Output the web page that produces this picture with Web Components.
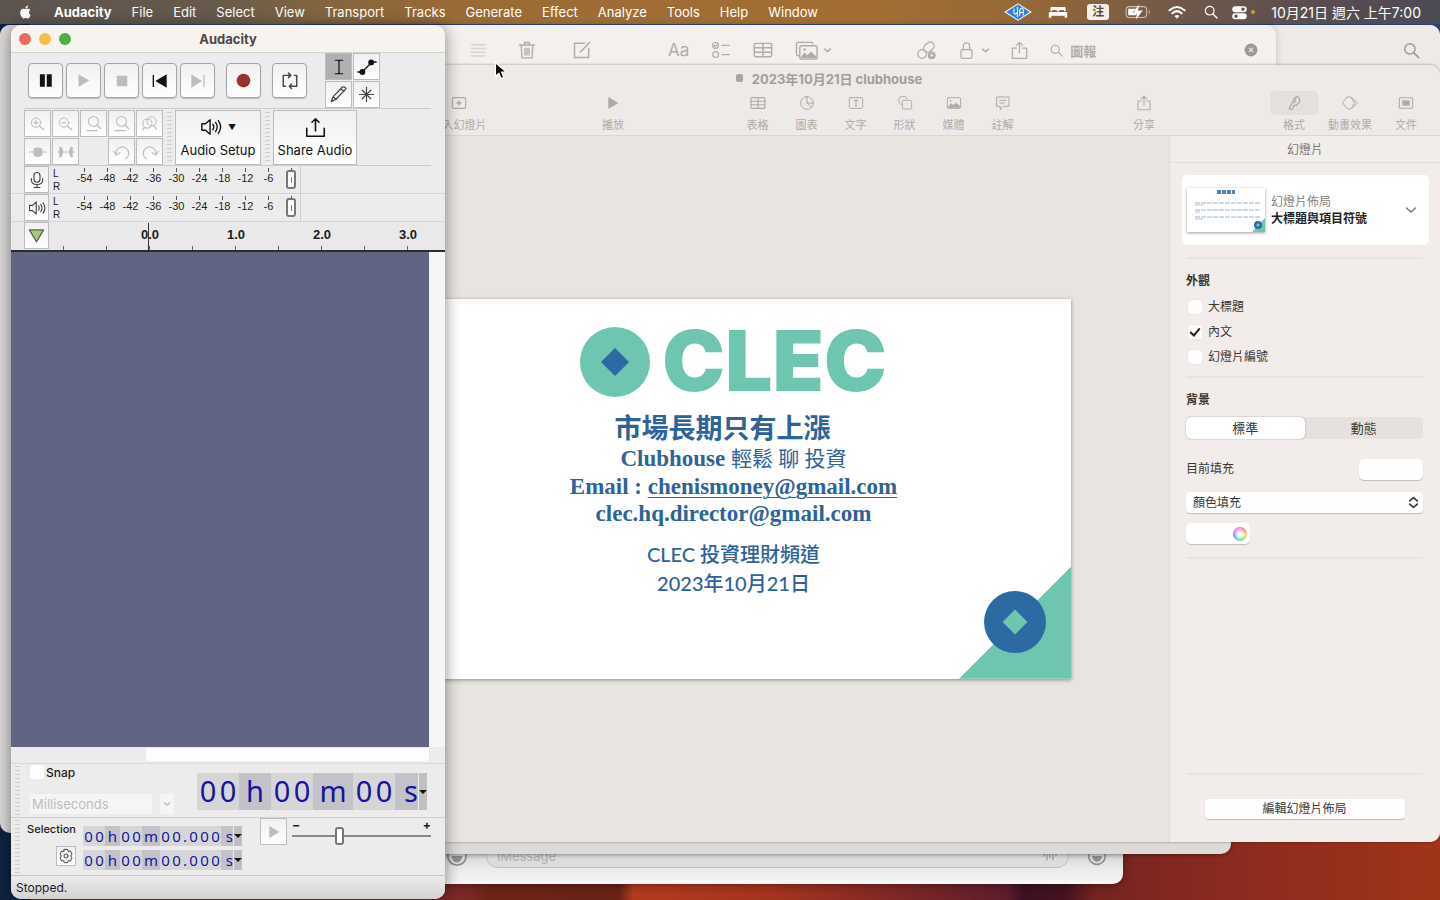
<!DOCTYPE html>
<html lang="zh-Hant">
<head>
<meta charset="utf-8">
<title>Desktop</title>
<style>
html,body{margin:0;height:100%}
body{font-family:Inter,"Noto Sans CJK TC",sans-serif;font-size:13px;overflow:hidden}
</style>
</head>
<body>
<mac-desktop></mac-desktop>
<script>
const BASE = `*{box-sizing:border-box}button,input,select{font:inherit;color:inherit;margin:0;padding:0;border:0;background:none}a{color:inherit;text-decoration:none}`;

class BaseElement extends HTMLElement {
  constructor() {
    super();
    this.attachShadow({ mode: "open" });
  }
  connectedCallback() {
    if (!this.shadowRoot.firstChild) this.shadowRoot.innerHTML = `<style>${BASE}${this.styles()}</style>${this.markup()}`;
  }
  styles() { return ":host{display:block}"; }
  markup() { return "<slot></slot>"; }
}

/* ---------- icons, all on a 24 by 24 grid ---------- */
const S = 'fill="none" stroke="currentColor" stroke-linecap="round" stroke-linejoin="round"';
const F = 'fill="currentColor"';
const ICONS = {
  apple: `<path ${F} d="M16.4 12.7c0-2.4 2-3.6 2.1-3.700-1.100-1.700-2.900-1.900-3.500-1.900-1.500-.2-2.900.9-3.700.9-.8 0-1.900-.9-3.200-.8-1.600 0-3.100.9-4 2.400-1.700 2.900-.4 7.300 1.200 9.700.8 1.200 1.800 2.500 3 2.400 1.200 0 1.700-.8 3.200-.8s1.900.8 3.200.8 2.200-1.200 3-2.300c.9-1.400 1.300-2.700 1.300-2.800 0 0-2.600-1-2.600-3.900zM14 5.500c.7-.8 1.100-1.900 1-3.100-1 .1-2.100.7-2.800 1.500-.6.7-1.200 1.900-1 3 1.100.1 2.200-.6 2.800-1.400z"/>`,
  ua: `<path d="M1 12 12 5l11 7-11 7z" fill="#2f83d2" stroke="#e8f1fa" stroke-width="1"/><path d="M8.500 9.500v3.500q1.500 2 3-1V8.500M11.500 8v8M13.500 15V10q2-3 3 0v4.500M13.500 12.500h3" ${S} stroke-width=".9"/>`,
  bed: `<path ${F} d="M4 6h16a1 1 0 0 1 1 1v4h-2V9.500h-5.500V11h-3V9.500H5V11H3V7a1 1 0 0 1 1-1zM2 12h20a1 1 0 0 1 1 1v6h-3v-2.500H4V19H1v-6a1 1 0 0 1 1-1z"/>`,
  battery: `<rect x="1" y="7" width="19" height="10" rx="3" ${S} stroke-width="1" opacity=".6"/><path ${F} d="M3 9h7l-2 4h3l-1 2H3zM13 5l-6 8h4l-1 6 6.500-8.500H12z"/><path ${F} opacity=".6" d="M22 10v4q2-2 0-4z"/>`,
  wifi: `<path d="M3 10q9-8 18 0M6.500 13.500q5.500-5 11 0" ${S} stroke-width="2.500"/><path ${F} d="m12 20-3-3.200q3-2.500 6 0z"/>`,
  search: `<circle cx="10" cy="10" r="6.500" ${S} stroke-width="1.800"/><path d="m15 15 6 6" ${S} stroke-width="2"/>`,
  control: `<path ${F} fill-rule="evenodd" d="M6 3h12a4 4 0 0 1 0 8.500H6A4 4 0 0 1 6 3zm11 1.800a2.400 2.400 0 1 0 .1 0zM6 13h12a4 4 0 0 1 0 8.500H6A4 4 0 0 1 6 13zm1 1.800a2.400 2.400 0 1 0 .1 0z"/>`,
  list: `<path d="M3 5h18M3 10h18M3 15h18M3 20h18" ${S} stroke-width="2"/>`,
  trash: `<path d="M3 6h18M9 6V3h6v3M5 6l1 15.500h12L19 6M9.500 10v8M12 10v8M14.500 10v8" ${S} stroke-width="1.600"/>`,
  compose: `<path d="M15 4H3v17h17V10M10 14.500 21 3" ${S} stroke-width="1.800"/>`,
  checklist: `<circle cx="5.500" cy="6.500" r="3.500" ${S} stroke-width="1.400"/><path d="m4 6.500 1.200 1.500L8 4.500M13 6.500h9M13 17.500h9" ${S} stroke-width="1.400"/><circle cx="5.500" cy="17.500" r="3.500" ${S} stroke-width="1.400"/>`,
  table: `<rect x="1.500" y="4" width="21" height="16" rx="2" ${S} stroke-width="1.700"/><path d="M2 9.300h20M2 14.600h20M12 4v16" ${S} stroke-width="1.700"/>`,
  media: `<path d="M4 17.500H3a1.500 1.500 0 0 1-1.500-1.500V5A1.500 1.500 0 0 1 3 3.500h14A1.500 1.500 0 0 1 18.500 5" ${S} stroke-width="1.500"/><rect x="5" y="7" width="18" height="14" rx="2" ${S} stroke-width="1.500"/><path ${F} d="m6 19 4-5 3 3 3.500-4L22 18v2H6z"/><circle cx="10" cy="11" r="1.300" ${F}/>`,
  photo: `<rect x="2" y="4" width="20" height="16" rx="2" ${S} stroke-width="1.500"/><path ${F} d="m3 18 5-6 3 3.500 4-4 6 5V19H3z"/><circle cx="7" cy="8.500" r="1.300" ${F}/>`,
  chevron: `<path d="m4 8 8 7 8-7" ${S} stroke-width="4"/>`,
  chevronThin: `<path d="m3 8 9 8 9-8" ${S} stroke-width="3"/>`,
  link: `<circle cx="7" cy="16" r="5" ${S} stroke-width="1.500"/><rect x="8" y="4" width="13" height="9" rx="4.500" transform="rotate(-40 14 8)" ${S} stroke-width="1.500"/><circle cx="18" cy="17.500" r="4.500" ${F}/><path d="M18 15.500v4M16 17.500h4" stroke="#f1edea" stroke-width="1"/>`,
  lock: `<rect x="5" y="11" width="14" height="11" rx="2" ${S} stroke-width="1.600"/><path d="M8 11V7q0-4.500 4-4.500T16 7v4" ${S} stroke-width="1.600"/>`,
  share: `<path d="M8 9H3v13h18V9h-5M12 15V2M8 5.500 12 2l4 3.500" ${S} stroke-width="1.600"/>`,
  clear: `<circle cx="12" cy="12" r="11" ${F}/><path d="m8.500 8.500 7 7m0-7-7 7" stroke="#eee" stroke-width="2"/>`,
  add: `<rect x="2" y="4" width="20" height="16" rx="1.500" ${S} stroke-width="1.700"/><path d="M12 9v6M9 12h6" ${S} stroke-width="2.200"/>`,
  play: `<path ${F} d="M5 3v18l15-9z"/>`,
  chart: `<circle cx="12" cy="12" r="9.500" ${S} stroke-width="1.500"/><path d="M12 2.500V12l7 6.500M12 12h9.500" ${S} stroke-width="1.500"/>`,
  text: `<rect x="2" y="4" width="20" height="16" rx="1.500" ${S} stroke-width="1.500"/><path d="M9 9V8h6v1M12 8v8M11 16h2" ${S} stroke-width="1.500"/>`,
  shape: `<path d="M6 14.500 2 8.500 5 2.500h8l2 3" ${S} stroke-width="1.400"/><rect x="8" y="8" width="14" height="13" rx="2" ${S} stroke-width="1.400"/>`,
  note: `<path d="M3 3h18v14h-8l-5 5v-5H3zM7 8h10M7 12h7" ${S} stroke-width="1.500"/>`,
  brush: `<path d="M16 2q6 2 4 9l-5 5-3-1-2 6q-3 2-5-1l7-14zM12 12l3-6" ${S} stroke-width="1.800"/>`,
  anim: `<path d="M8 3h5l6 9-6 9H8l-7-9zM15 4l8 8-8 8" ${S} stroke-width="1.500"/>`,
  doc: `<rect x="2" y="4" width="20" height="16" rx="1.500" ${S} stroke-width="1.600"/><rect x="6.500" y="8" width="11" height="8" ${F}/>`,
  pause: `<path ${F} d="M3 2h8v20H3zM14 2h8v20h-8z"/>`,
  stop: `<path ${F} d="M3 3h18v18H3z"/>`,
  start: `<path ${F} d="M1 3h2v18H1zM22 2v20L5 12z"/>`,
  end: `<path ${F} d="M20 3h2v18h-2zM2 2v20l16-10z"/>`,
  record: `<circle cx="12" cy="12" r="11" ${F}/>`,
  loop: `<path d="M3 9V4.500h9M21 9V4.500h-3M3 6v13h3M21 6v13h-9M10 1.500l3 3-3 3M14 16l-3 3 3 3" ${S} stroke-width="1.900"/>`,
  ibeam: `<path d="M7 3h4l1 1 1-1h4M7 21h4l1-1 1 1h4M12 4v16" ${S} stroke-width="1.600"/>`,
  envelope: `<path d="M1 18h5L18 6h5" ${S} stroke-width="1.600"/><circle cx="6.500" cy="18" r="3.500" ${F}/><circle cx="17" cy="6.500" r="3.500" ${F}/>`,
  pencil: `<path d="m3 21 2-6L17 2.500q3-1 4.500 2L9 18zM5 15l4 3M15 5l4 3" ${S} stroke-width="1.600"/>`,
  star: `<path d="M12 2v20M2 12h20M6 6l12 12M18 6 6 18" ${S} stroke-width="1.600"/>`,
  zoomIn: `<circle cx="9" cy="10" r="7" ${S} stroke-width="1.500"/><path d="m14 15 7 6M9 7v6M6 10h6" ${S} stroke-width="1.700"/>`,
  zoomOut: `<circle cx="9" cy="10" r="7" ${S} stroke-width="1.500"/><path d="m14 15 7 6M6 10h6" ${S} stroke-width="1.700"/>`,
  zoomSel: `<circle cx="12" cy="9" r="7" ${S} stroke-width="1.500"/><path d="m17 14 5 5M3 22h14" ${S} stroke-width="1.900"/>`,
  zoomToggle: `<circle cx="9" cy="12" r="6.500" ${S} stroke-width="1.500"/><circle cx="15" cy="9" r="6.500" ${S} stroke-width="1.500"/><path d="m18 15 4 5M5 18l-3 3" ${S} stroke-width="1.700"/>`,
  trim: `<path d="M1 12h22" ${S} stroke-width="1.500"/><path ${F} d="M6 8q5-5 12 0v8q-7 5-12 0z"/>`,
  silence: `<path d="M1 12h22" ${S} stroke-width="1.500"/><path ${F} d="M3 5h3l2 5v4l-2 5H3zM21 5h-3l-2 5v4l2 5h3z"/>`,
  undo: `<path d="M4 15a8.500 8.500 0 1 1 13 6M1 11l3 5 5-3" ${S} stroke-width="1.700"/>`,
  redo: `<path d="M20 15a8.500 8.500 0 1 0-13 6M23 11l-3 5-5-3" ${S} stroke-width="1.700"/>`,
  speaker: `<path d="M2 8.500h4L11 4v16l-5-4.500H2zM14 9q2 3 0 6M17 7q3.500 5 0 10M20 5q5 7 0 14" ${S} stroke-width="1.500"/>`,
  upload: `<path d="M2 13v9h20v-9M12 16V2M8 6l4-4 4 4" ${S} stroke-width="1.800"/>`,
  mic: `<rect x="8" y="2" width="8" height="13" rx="4" ${S} stroke-width="1.500"/><path d="M4.500 10v2q0 6 7.500 6t7.500-6v-2M12 18v4M8 22h8" ${S} stroke-width="1.500"/>`,
  pin: `<path d="M2 4h20L12 21z" fill="#a6c97a" stroke="#5d6650" stroke-width="1.800" stroke-linejoin="round"/>`,
  gear: `<path d="M9.500 2h5l1 3 3-.5 2.500 4.500-2 3 2 3-2.500 4.500-3-.5-1 3h-5l-1-3-3 .5L3 15l2-3-2-3 2.500-4.500 3 .5z" ${S} stroke-width="1.500"/><circle cx="12" cy="12" r="3" ${S} stroke-width="1.500"/>`,
  updown: `<path d="m5 9 7-6 7 6M5 15l7 6 7-6" ${S} stroke-width="3"/>`,
  wave: `<path d="M3 6v6M7.500 2v16M12 5v10M16.500 2v16M21 6v6" ${S} stroke-width="1.500"/>`,
  smile: `<circle cx="12" cy="12" r="10" ${S} stroke-width="2"/><path ${F} d="M6 12h12q-1 7-6 7t-6-7z"/>`,
  cursor: `<path d="M2 1v18l4.500-4 3 7 3.500-1.500-3-7h6.500z" fill="#000" stroke="#fff" stroke-width="1.500"/>`
};
class UiIcon extends BaseElement {
  styles() {
    const s = this.getAttribute("size") || 16;
    return `:host{display:block;flex:none;width:${s}px;height:${s}px}svg{display:block;width:100%;height:100%}`;
  }
  markup() { return `<svg viewBox="0 0 24 24" aria-hidden="true">${ICONS[this.getAttribute("name")]}</svg>`; }
}
customElements.define("ui-icon", UiIcon);
const icon = (name, size) => `<ui-icon name="${name}" size="${size || 16}"></ui-icon>`;

/* ---------- menu bar ---------- */
class MenuBar extends BaseElement {
  styles() {
    return `:host{display:flex;justify-content:space-between;align-items:center;height:24px;padding:0 19px 0 18px;color:#fff;
      background:linear-gradient(90deg,#5c544f 0,#665a4b 15%,#82653f 22%,#9b6b35 32%,#a36e33 60%,#946837 72%,#70584a 82%,#584d50 92%,#4d4a56 100%)}
      nav,.status{display:flex;align-items:center}nav{gap:20px}nav a{white-space:nowrap}.app{font-weight:700}
      .status{gap:16px}.ime{width:22px;height:16px;margin-left:3px;border-radius:3px;background:#f6efe6;color:#5c4934;text-align:center;font-size:12px;line-height:16px;font-weight:700}
      .cc{display:flex;align-items:center;gap:3px;margin-left:-4px}.cc i{width:4px;height:4px;border-radius:50%;background:#d69a34}time{font-size:14px;white-space:nowrap}`;
  }
  markup() {
    const items = ["File", "Edit", "Select", "View", "Transport", "Tracks", "Generate", "Effect", "Analyze", "Tools", "Help", "Window"];
    return `<nav>${icon("apple", 16)}<a class="app" href="#">Audacity</a>${items.map(t => `<a href="#">${t}</a>`).join("")}</nav>
      <div class="status">${icon("ua", 28)}${icon("bed", 20)}<span class="ime">注</span>${icon("battery", 26)}${icon("wifi", 20)}${icon("search", 16)}<span class="cc">${icon("control", 17)}<i></i></span><time>10月21日 週六 上午7:00</time></div>`;
  }
}
customElements.define("menu-bar", MenuBar);

/* ---------- background windows ---------- */
class FinderWindow extends BaseElement {
  styles() {
    return `:host{display:block;background:#dcdad9;border-radius:10px}
      header{display:flex;justify-content:flex-end;align-items:center;height:50px;padding:0 19px;background:linear-gradient(90deg,#dcdad9,#eeeae7 60%);border-radius:10px 10px 0 0;color:#9b9895}`;
  }
  markup() { return `<header><button aria-label="Search">${icon("search", 19)}</button></header>`; }
}
customElements.define("finder-window", FinderWindow);

class NotesWindow extends BaseElement {
  styles() {
    return `:host{display:block;background:#dedbda;border-radius:10px;box-shadow:0 0 6px #0003}
      header{display:flex;align-items:center;height:50px;padding:0 18px 0 170px;background:#f4f0ed;border-radius:10px 10px 0 0;color:#b0acaa}
      .g{display:flex;align-items:center}.edit{gap:35px}.format{gap:22px;margin-left:76px;font-size:17px}.more{gap:20px;margin-left:84px}
      .pair{display:flex;align-items:center;gap:5px}.faint{opacity:.4;margin-right:-5px}
      label{display:flex;flex:1;min-width:0;align-items:center;gap:6px;margin-left:20px}input{flex:1;min-width:0;font-weight:700}label ui-icon:last-child{color:#9c9996}`;
  }
  markup() {
    return `<header><div class="g edit"><button class="faint" aria-label="List">${icon("list", 18)}</button><button aria-label="Delete">${icon("trash", 20)}</button><button aria-label="New note">${icon("compose", 20)}</button></div>
      <div class="g format"><button>Aa</button><button aria-label="Checklist">${icon("checklist", 20)}</button><button aria-label="Table">${icon("table", 20)}</button><button class="pair" aria-label="Media">${icon("media", 23)}${icon("chevron", 9)}</button></div>
      <div class="g more"><button aria-label="Link">${icon("link", 21)}</button><button class="pair" aria-label="Lock">${icon("lock", 19)}${icon("chevron", 9)}</button><button aria-label="Share">${icon("share", 19)}</button></div>
      <label>${icon("search", 15)}<input aria-label="Search" value="圖報">${icon("clear", 14)}</label></header>`;
  }
}
customElements.define("notes-window", NotesWindow);

class ChatWindow extends BaseElement {
  styles() {
    return `:host{display:flex;flex-direction:column;justify-content:flex-end;background:linear-gradient(0deg,#f8f8f8,#e8e8e8 18px,#cfcfcf 32px);border-radius:10px;box-shadow:0 2px 8px #0005}
      footer{display:flex;align-items:center;gap:18px;padding:0 16px 16px;color:#8f8f8f}
      label{display:flex;flex:1;align-items:center;height:24px;padding:0 10px;border:1px solid #c0c0c0;border-radius:12px;background:#dcdcdc}
      input{flex:1;color:#999}input::placeholder{color:#b0b0b0}`;
  }
  markup() { return `<footer>${icon("smile", 22)}<label><input aria-label="Message" placeholder="iMessage">${icon("wave", 16)}</label>${icon("smile", 20)}</footer>`; }
}
customElements.define("chat-window", ChatWindow);

/* ---------- presentation window ---------- */
class ToolItem extends BaseElement {
  styles() {
    return `:host{display:block}button{display:flex;flex-direction:column;align-items:center;gap:2px;width:100%;white-space:nowrap;font-size:11px;line-height:16px}
      .pic{display:flex;justify-content:center;align-items:center;width:100%;height:24px}:host([active]) .pic{background:#e4e0dd;border-radius:5px}`;
  }
  markup() { return `<button><span class="pic">${icon(this.getAttribute("icon"), 16)}</span><slot></slot></button>`; }
}
customElements.define("tool-item", ToolItem);

class CoinMark extends BaseElement {
  styles() { return `:host{display:block;flex:none}svg{display:block;width:100%;height:100%}`; }
  markup() { return `<svg viewBox="0 0 70 70"><circle cx="35" cy="35" r="35" fill="var(--disc)"/><path d="m35 21 14 14-14 14-14-14z" fill="var(--gem)"/></svg>`; }
}
customElements.define("coin-mark", CoinMark);

class ClecSlide extends BaseElement {
  styles() {
    return `:host{display:block;position:relative;aspect-ratio:676/380;background:#fff;box-shadow:0 1px 4px #0006;color:#2d6399;text-align:center}
      .logo{display:flex;justify-content:center;align-items:flex-start;gap:12px;height:70px;margin-top:28px;color:#6ec5b0;font:900 84px/68px Inter,sans-serif}
      .logo coin-mark{width:70px;height:70px;--disc:#6ec5b0;--gem:#2b6aa3}
      h1{margin:12px 22px 0 0;font:700 27px/36px "Noto Sans CJK TC",sans-serif}
      p{margin:0;font:700 23px/27px "Liberation Serif","Noto Sans CJK TC",serif}p span{font-weight:400;font-size:21px}p a{text-decoration:underline;text-decoration-thickness:1px;text-underline-offset:3px}
      .foot{margin-top:13px;font:500 20px/29px Lato,"Noto Sans CJK TC",sans-serif}
      .corner{position:absolute;right:0;bottom:0;width:112px;height:112px;background:#6ec5b0;clip-path:polygon(100% 0,100% 100%,0 100%)}
      .badge{position:absolute;right:25px;bottom:26px;width:62px;height:62px;--disc:#2b6aa3;--gem:#6ec5b0}`;
  }
  markup() {
    return `<div class="logo"><coin-mark></coin-mark><span>CLEC</span></div><h1>市場長期只有上漲</h1>
      <p>Clubhouse <span>輕鬆 聊 投資</span></p><p>Email : <a href="#">chenismoney@gmail.com</a></p><p>clec.hq.director@gmail.com</p>
      <div class="foot">CLEC 投資理財頻道<br>2023年10月21日</div><div class="corner"></div><coin-mark class="badge"></coin-mark>`;
  }
}
customElements.define("clec-slide", ClecSlide);

class SlideThumb extends BaseElement {
  styles() { return `:host{display:block;flex:none;width:78px;height:44px;box-shadow:0 1px 3px #0006;background:#fff}svg{display:block}`; }
  markup() {
    return `<svg width="78" height="44" viewBox="0 0 78 44"><path d="M30 4h18" stroke="#4f7fb5" stroke-width="4" stroke-dasharray="4 1"/>
      <path d="M8 15h65M8 22h64M8 29h65" stroke="#9ab3cf" stroke-width="1" stroke-dasharray="5 1"/><path d="M8 17h8M8 24h5M8 31h8" stroke="#b5c7db"/><path d="M78 30v14H65z" fill="#6ec5b0"/><circle cx="71" cy="37" r="4" fill="#2b6aa3"/><path d="m71 35 2 2-2 2-2-2z" fill="#6ec5b0"/></svg>`;
  }
}
customElements.define("slide-thumb", SlideThumb);

class CheckRow extends BaseElement {
  styles() {
    return `:host{display:block}label{display:flex;align-items:center;gap:6px;height:25px;padding-left:2px}
      input{appearance:none;display:grid;place-items:center;width:14px;height:14px;border-radius:3px;background:#fff;box-shadow:0 0 1px #0003}
      input:checked::after{content:"";width:4px;height:8px;margin-bottom:2px;border:solid #222;border-width:0 2px 2px 0;rotate:40deg}`;
  }
  markup() { return `<label><input type="checkbox" ${this.hasAttribute("checked") ? "checked" : ""}><slot></slot></label>`; }
}
customElements.define("check-row", CheckRow);

class FormatInspector extends BaseElement {
  styles() {
    return `:host{display:flex;flex-direction:column;background:#f2edea;border-left:1px solid #dfdad7;color:#3a3735;font-size:12px;line-height:18px}
      .title{height:27px;line-height:27px;text-align:center;border-bottom:1px solid #e3dcd9;color:#7b7775}
      .body{display:flex;flex-direction:column;flex:1;padding:12px 17px 0 16px}
      .layout{display:flex;align-items:center;gap:6px;height:70px;margin:0 -6px 12px -4px;padding:0 12px 0 5px;border-radius:5px;background:#fff;text-align:left;line-height:17px}
      .layout span{flex:1;color:#858280}.layout b{display:block;color:#222}.layout ui-icon{color:#777}
      hr{width:100%;margin:0;border:0;border-top:2px solid #e9e3e0}
      section{display:flex;flex-direction:column;padding:12px 0 7px}h2{margin:0 0 3px;font-size:12px;line-height:20px}
      .seg{display:flex;margin:4px 0 18px;height:22px;background:#e6e0de;border-radius:5px}.seg button{flex:1;font-size:13px}.seg .on{background:#fff;border-radius:5px;box-shadow:0 0 2px #0005}
      .row{display:flex;justify-content:space-between;align-items:center;height:24px}.well{width:64px;height:21px;border-radius:5px;background:#fff;box-shadow:0 1px 1px #0003}
      .pick{display:grid;align-items:center;margin:11px 0 10px}.pick>*{grid-area:1/1}.pick ui-icon{justify-self:end;margin-right:3px;pointer-events:none}
      select{appearance:none;width:100%;height:21px;padding:0 7px;border-radius:4px;background:#fff;box-shadow:0 1px 1px #0003}
      .colour{display:flex;justify-content:flex-end;align-items:center;padding-right:3px;margin-bottom:6px}.colour i{width:14px;height:14px;border-radius:50%;background:radial-gradient(#fff 20%,#fff0 75%),conic-gradient(#f6c,#f66,#fc4,#6d6,#4cf,#66f,#c6f,#f6c)}
      .end{margin-top:auto}.edit{align-self:center;width:200px;height:20px;margin:24px 0 23px;border-radius:4px;background:#fff;box-shadow:0 1px 1px #0003}`;
  }
  markup() {
    return `<div class="title">幻燈片</div><div class="body">
      <button class="layout"><slide-thumb></slide-thumb><span>幻燈片佈局<b>大標題與項目符號</b></span>${icon("chevronThin", 12)}</button>
      <hr><section><h2>外觀</h2><check-row>大標題</check-row><check-row checked>內文</check-row><check-row>幻燈片編號</check-row></section>
      <hr><section><h2>背景</h2><div class="seg"><button class="on">標準</button><button>動態</button></div>
      <div class="row"><span>目前填充</span><button class="well" aria-label="目前填充"></button></div>
      <div class="pick"><select aria-label="填充"><option>顏色填充</option></select>${icon("updown", 13)}</div>
      <button class="well colour" aria-label="顏色"><i></i></button></section><hr>
      <hr class="end"><button class="edit">編輯幻燈片佈局</button></div>`;
  }
}
customElements.define("format-inspector", FormatInspector);

class KeynoteWindow extends BaseElement {
  styles() {
    return `:host{display:flex;flex-direction:column;background:#e8e5e1;border-radius:10px;box-shadow:0 0 3px #0006;overflow:hidden}
      header{background:#eeeae8;border-bottom:1px solid #d9d5d2;color:#aeaaa7}
      .title{display:flex;justify-content:center;align-items:center;gap:9px;height:26px;padding-right:12px;font-weight:700;color:#a29e9b}.title i{width:7px;height:8px;border-radius:2px;background:#a9a5a2}
      .tools{display:flex;height:44px;padding:0 10px 0 199px}.tools tool-item{width:48px}.tools .w{width:60px}.tools .x{width:64px}.insert{display:flex}.insert tool-item{width:49px}
      .gap1{flex:100}.gap2{flex:96}.gap3{flex:93}.gap4{flex:102}
      .main{display:flex;flex:1;min-height:0}.canvas{display:flex;align-items:center;flex:1;padding:0 98px 0 166px}clec-slide{width:100%}format-inspector{width:271px}`;
  }
  markup() {
    const t = (i, l, a = "") => `<tool-item icon="${i}" ${a}>${l}</tool-item>`;
    return `<header><div class="title"><i></i><span>2023年10月21日 clubhouse</span></div><div class="tools">
      ${t("add", "加入幻燈片", 'class="w"')}<span class="gap1"></span>${t("play", "播放")}<span class="gap2"></span><div class="insert">${t("table", "表格")}${t("chart", "圖表")}${t("text", "文字")}${t("shape", "形狀")}${t("photo", "媒體")}${t("note", "註解")}</div>
      <span class="gap3"></span>${t("share", "分享")}<span class="gap4"></span>${t("brush", "格式", "active")}${t("anim", "動畫效果", 'class="x"')}${t("doc", "文件")}</div></header>
      <div class="main"><div class="canvas"><clec-slide></clec-slide></div><format-inspector></format-inspector></div>`;
  }
}
customElements.define("keynote-window", KeynoteWindow);

/* ---------- Audacity ---------- */
class PushButton extends BaseElement {
  styles() {
    return `:host{display:block;width:35px;height:35px}button{display:grid;place-items:center;width:100%;height:100%;border:1px solid #bcbcbc;background:linear-gradient(#f0f0f0,#fff);color:#111}
      :host([round]) button{border-radius:4px;border-color:#a5a5a5;box-shadow:0 1px 1px #0003}:host([dim]) button{color:#bdbdbd}:host([soft]) button{color:#444}:host([on]) button{background:#b0b0b0}:host([rec]) button{color:#99322f}`;
  }
  markup() { return `<button aria-label="${this.getAttribute("label") || ""}"><slot></slot></button>`; }
}
customElements.define("push-button", PushButton);

class LevelMeter extends BaseElement {
  styles() {
    return `:host{display:flex;height:28px;padding-left:13px;border-bottom:1px solid #d4d4d4}push-button{width:25px;height:27px}
      .lr{display:grid;align-content:center;width:18px;padding-left:4px;font:10px/13px "Liberation Sans",sans-serif}
      .scale{display:grid;grid-template-columns:repeat(10,23px);position:relative;width:234px;padding-left:6px;font:500 11px/14px "Liberation Sans",sans-serif;text-align:center;overflow:hidden;border-right:1px solid #cfcfcf}
      .scale span{padding-top:5px;background:linear-gradient(#555,#555) center 2px/1px 4px no-repeat}
      input{appearance:none;position:absolute;inset:4px 4px 4px auto;width:10px;border:2px solid #777;border-radius:3px;background:#fff}input::-webkit-slider-thumb{appearance:none;width:1px;height:6px;background:#777}`;
  }
  markup() {
    const marks = ["-54", "-48", "-42", "-36", "-30", "-24", "-18", "-12", "-6", "0"];
    return `<push-button soft label="${this.getAttribute("label")}">${icon(this.getAttribute("icon"), 18)}</push-button><div class="lr"><span>L</span><span>R</span></div>
      <div class="scale">${marks.map(m => `<span>${m}</span>`).join("")}<input type="range" aria-label="${this.getAttribute("label")}"></div>`;
  }
}
customElements.define("level-meter", LevelMeter);

class TimeRuler extends BaseElement {
  styles() {
    return `:host{display:flex;height:30px;padding-left:13px;border-bottom:2px solid #2c2c2c;background:#e9e9e9}push-button{width:25px;height:27px}
      .ruler{display:grid;grid-template-columns:repeat(4,86px);flex:1;padding-left:58px;position:relative;overflow:hidden;text-align:center;font:700 13px/26px "Liberation Sans",sans-serif;
      background:repeating-linear-gradient(90deg,#666 0 1px,#0000 1px 43px) 14px 100%/100% 4px no-repeat}
      .ruler::after{content:"";position:absolute;left:99px;top:1px;bottom:0;width:1px;background:#333}`;
  }
  markup() { return `<push-button label="Pinned play head">${icon("pin", 17)}</push-button><div class="ruler"><span>0.0</span><span>1.0</span><span>2.0</span><span>3.0</span></div>`; }
}
customElements.define("time-ruler", TimeRuler);

class TimeField extends BaseElement {
  styles() {
    return `:host{display:flex;height:20px;--d:11px;--h:15px;--m:18px;--s:12px;--p:6px;font:15px/20px "Noto Sans",sans-serif;color:#1414a0}
      :host([large]){height:37px;--d:20px;--h:32px;--m:40px;--s:23px;font-size:29px;line-height:36px}
      .n{display:flex;background:#d6d6d9}.n span{width:var(--d);text-align:center}.n .p{width:var(--p)}.u{background:#c2c2c8;text-align:center}.h{width:var(--h)}.m{width:var(--m)}.s{width:var(--s);text-align:right}
      :host([large]) .n{padding:0 1px}button{width:8px;margin-left:1px;background:#c0c0c4;display:grid;place-items:center}button::after{content:"";border:4px solid transparent;border-top-color:#111;border-bottom:0}`;
  }
  markup() {
    const n = t => `<span class="n">${[...t].map(c => `<span class="${c === "." ? "p" : ""}">${c}</span>`).join("")}</span>`;
    return `${n("00")}<span class="u h">h</span>${n("00")}<span class="u m">m</span>${n(this.hasAttribute("large") ? "00" : "00.000")}<span class="u s">s</span><button aria-label="Format"></button>`;
  }
}
customElements.define("time-field", TimeField);

class AudacityWindow extends BaseElement {
  styles() {
    return `:host{display:flex;flex-direction:column;background:#ececec;border-radius:10px;box-shadow:0 2px 16px #0007;overflow:hidden;color:#1c1c1c}
      .bar{display:grid;grid-template-columns:1fr auto 1fr;align-items:center;height:28px;padding:0 8px;background:#f7f3ef;border-bottom:1px solid #d5d1ce;font-weight:700;color:#4c4845}
      .lights{display:flex;gap:8px}.lights i{width:12px;height:12px;border-radius:50%;background:#ee6a5f}.lights i:nth-child(2){background:#f5bd4f}.lights i:nth-child(3){background:#4fae48}
      .row{display:flex;margin:0 14px 0 13px}.transport{height:56px;padding-left:4px;gap:3px;align-items:flex-start;border-bottom:1px solid #ccc}.transport>push-button{margin-top:10px}.transport .rec,.transport .loop{margin-left:8px}
      .tools{display:grid;grid-template-columns:27px 27px;gap:1px;margin-left:15px}.tools push-button,.edit push-button{width:27px;height:27px}
      .grip{width:5px;margin:2px 4px;background:repeating-linear-gradient(#ccc 0 1px,#0000 1px 4px)}
      .second{height:57px;padding-top:1px;border-bottom:1px solid #ccc}.second .grip{margin:2px 3px 2px 4px}.edit{display:grid;grid-template-columns:repeat(5,27px);gap:1px;height:55px}.edit :nth-child(8){grid-column:4}
      .wide{width:86px;height:55px}.share{width:84px}.wide div{display:grid;justify-items:center;gap:3px;line-height:18px;white-space:nowrap}.pair{display:flex;align-items:center;gap:6px;font-size:8px}
      .tracks{flex:1;display:flex;background:#f6f6f8}.tracks::before{content:"";flex:1;background:#616482}.tracks::after{content:"";width:16px}
      .scroll{height:16px;display:flex}.scroll::before{content:"";margin:1px 16px 2px 135px;flex:1;background:#fdfdfd}
      .snap{display:flex;height:55px;border-top:1px solid #d8d8d8;border-bottom:1px solid #d0d0d0;padding-right:18px}.snapbox{display:flex;flex-direction:column;gap:14px;width:158px;margin-left:6px;font-size:12px;font-weight:500}
      .snapbox label{display:flex;align-items:center;gap:2px;height:16px}.snapbox label input{appearance:none;width:14px;height:14px;border-radius:3px;background:#fff}
      .combo{display:grid;align-items:center;color:#bdbdbd}.combo>*{grid-area:1/1}.combo select{appearance:none;width:144px;height:20px;padding-left:2px;background:linear-gradient(90deg,#f5f5f5 122px,#ececec 122px 130px,#f5f5f5 130px);font-size:13px;font-weight:400;opacity:1}.combo ui-icon{margin-left:133px}
      .snap time-field{margin:9px 0 0 auto}
      .sel{display:flex;height:58px;border-bottom:1px solid #c4c4c4}.name{display:flex;flex-direction:column;align-items:flex-end;gap:9px;width:52px;font-size:11px;line-height:16px;font-weight:500;padding-top:3px}.name push-button{width:20px;height:20px}
      .times{display:grid;gap:4px;align-content:center;margin-left:7px;padding-top:2px}.speed{display:flex;margin-left:18px;flex:1;padding-right:14px}.speed push-button{width:27px;height:27px}
      .slide{flex:1;margin-left:5px}.slide div{display:flex;justify-content:space-between;font-size:12px;font-weight:700;line-height:14px;height:9px}
      .slide input{appearance:none;display:block;width:100%;height:18px;background:linear-gradient(#888,#888) 0 50%/100% 2px no-repeat}.slide input::-webkit-slider-thumb{appearance:none;width:9px;height:18px;border:2px solid #777;border-radius:3px;background:#fff}
      .stat{height:23px;padding-left:5px;font-size:12px;line-height:23px;background:linear-gradient(#ececec,#d2d2d4)}`;
  }
  markup() {
    const b = (i, s, l, a = "") => `<push-button label="${l}" ${a}>${icon(i, s)}</push-button>`;
    return `<div class="bar"><div class="lights"><i></i><i></i><i></i></div><span>Audacity</span></div>
      <div class="row transport">${b("pause", 15, "Pause", "round")}${b("play", 17, "Play", "round dim")}${b("stop", 14, "Stop", "round dim")}${b("start", 16, "Skip to start", "round")}${b("end", 16, "Skip to end", "round dim")}${b("record", 15, "Record", 'round rec class="rec"')}${b("loop", 18, "Loop", 'round soft class="loop"')}
        <div class="tools">${b("ibeam", 18, "Selection tool", "on")}${b("envelope", 20, "Envelope tool")}${b("pencil", 19, "Draw tool", "soft")}${b("star", 17, "Multi tool", "soft")}</div></div>
      <div class="row second"><div class="edit">${b("zoomIn", 16, "Zoom in", "dim")}${b("zoomOut", 16, "Zoom out", "dim")}${b("zoomSel", 17, "Fit selection", "dim")}${b("zoomSel", 17, "Fit project", "dim")}${b("zoomToggle", 17, "Zoom toggle", "dim")}${b("trim", 18, "Trim", "dim")}${b("silence", 18, "Silence", "dim")}${b("undo", 18, "Undo", "dim")}${b("redo", 18, "Redo", "dim")}</div>
        <span class="grip"></span><push-button class="wide" label="Audio Setup"><div><span class="pair">${icon("speaker", 22)}▼</span><span>Audio Setup</span></div></push-button>
        <span class="grip"></span><push-button class="wide share" label="Share Audio"><div>${icon("upload", 21)}<span>Share Audio</span></div></push-button></div>
      <level-meter icon="mic" label="Record level"></level-meter><level-meter icon="speaker" label="Playback level"></level-meter><time-ruler></time-ruler>
      <div class="tracks"></div><div class="scroll"></div>
      <div class="snap"><span class="grip"></span><div class="snapbox"><label><input type="checkbox">Snap</label><div class="combo"><select aria-label="Snap to" disabled><option>Milliseconds</option></select>${icon("chevron", 8)}</div></div><time-field large></time-field></div>
      <div class="sel"><span class="grip"></span><div class="name"><span>Selection</span>${b("gear", 16, "Selection settings", "soft")}</div><div class="times"><time-field></time-field><time-field></time-field></div>
        <div class="speed">${b("play", 16, "Play at speed", "dim")}<div class="slide"><div><span>−</span><span>+</span></div><input type="range" min="0" max="100" value="33" aria-label="Playback speed"></div></div></div>
      <div class="stat">Stopped.</div>`;
  }
}
customElements.define("audacity-window", AudacityWindow);

class MacDesktop extends BaseElement {
  styles() {
    return `:host{display:block;position:relative;height:100vh;overflow:hidden;
      background:linear-gradient(90deg,#0f2340 0 30px,#0000 30px),linear-gradient(0deg,#0000 50%,#26426d 50%),
      linear-gradient(90deg,#7b2a28 32%,#6f2418 34%,#6a2216 43%,#b23b1e 44%,#a3331f 54%,#5d1d2c 70%,#3d1022 71%,#451220 74%,#742420 76%,#8a2a20 85%,#9f3418 100%)}
      finder-window,notes-window,chat-window,keynote-window,audacity-window,.pointer{position:absolute}
      finder-window{inset:25px 0 67px 0}chat-window{inset:200px 317px 16px 430px}
      notes-window{inset:25px 164px 200px 299px}.sheet{position:absolute;inset:400px 209px 46px 299px;border-radius:10px;background:#dedad8;box-shadow:0 1px 4px #0006}
      keynote-window{inset:65px 0 58px 230px}audacity-window{left:11px;top:25px;bottom:1px;width:434px}.pointer{left:494px;top:62px}`;
  }
  markup() {
    return `<menu-bar></menu-bar><finder-window></finder-window><chat-window></chat-window><div class="sheet"></div><notes-window></notes-window>
      <keynote-window></keynote-window><audacity-window></audacity-window><div class="pointer">${icon("cursor", 18)}</div>`;
  }
}
customElements.define("mac-desktop", MacDesktop);
</script>
</body>
</html>
